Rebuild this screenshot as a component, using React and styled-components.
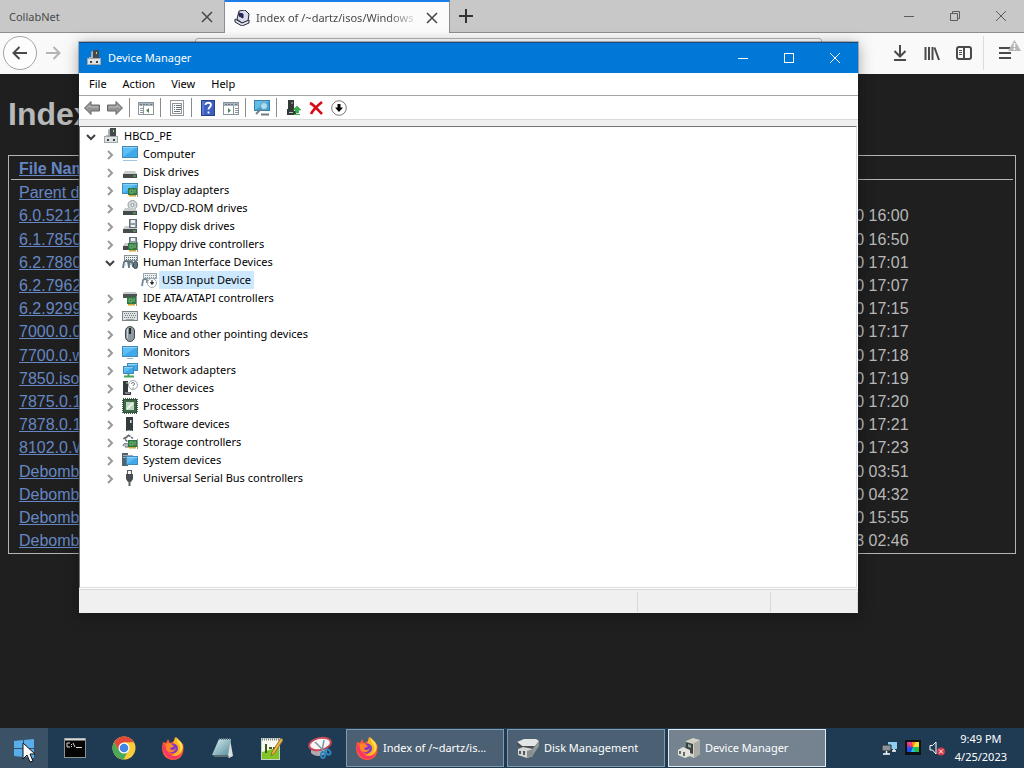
import React, { useState } from 'react';
import styled, { createGlobalStyle, css } from 'styled-components';

const uiFont = `'Noto Sans', 'Open Sans', sans-serif`;

const GlobalStyle = createGlobalStyle`
  * {
    box-sizing: border-box;
  }
  body {
    margin: 0;
    background: #1f1f1f;
  }
  button {
    padding: 0;
    border: 0;
    background: none;
    color: inherit;
    font: inherit;
  }
  svg {
    display: block;
    flex: none;
  }
`;

const Desktop = styled.div`
  position: relative;
  display: flex;
  flex-direction: column;
  height: 100vh;
  overflow: hidden;
  font: 11px/18px ${uiFont};
`;

/* browser */

const Browser = styled.div`
  flex: 1;
  min-height: 0;
  display: flex;
  flex-direction: column;
`;
const TabStrip = styled.div`
  display: flex;
  height: 33px;
  background: #c8c8c8;
  border-bottom: 1px solid #8e8e8e;
  color: #4a4a4a;
`;
const Tab = styled.div`
  display: flex;
  align-items: center;
  gap: 6px;
  width: 225px;
  padding: 2px 11px 0 9px;
  border-right: 1px solid #8e8e8e;
  ${(props) =>
    props.$active &&
    css`
      height: 33px;
      padding-top: 0;
      background: #fbfbfb;
      border-top: 2px solid #1a7de8;
    `}
`;
const TabTitle = styled.span`
  flex: 1;
  overflow: hidden;
  white-space: nowrap;
  ${(props) =>
    props.$fade &&
    css`
      mask-image: linear-gradient(to left, transparent, #000 32px);
    `}
`;
const NewTab = styled.button`
  display: grid;
  place-items: center;
  width: 32px;
`;
const BrowserControls = styled.div`
  display: flex;
  margin-left: auto;
  color: #5c5c5c;
`;
const BrowserControl = styled.button`
  display: grid;
  place-items: center;
  width: 46px;
`;
const NavBar = styled.div`
  display: flex;
  align-items: center;
  height: 41px;
  padding: 0 0 2px 3px;
  background: #f9f9f9;
  color: #4a4a4a;
`;
const BackButton = styled.button`
  display: grid;
  place-items: center;
  width: 34px;
  height: 34px;
  border: 1px solid #a5a5a5;
  border-radius: 50%;
  background: #fdfdfd;
`;
const NavButton = styled.button`
  display: grid;
  place-items: center;
  width: 32px;
  height: 32px;
  color: ${(props) => (props.$dim ? '#b4b4b4' : 'inherit')};
`;
const AddressBox = styled.input`
  flex: 1;
  min-width: 0;
  height: 30px;
  margin: 0 62px 0 126px;
  border: 1px solid #b4b4b4;
  border-radius: 3px;
  background: #fff;
  font: inherit;
`;
const MenuSection = styled.div`
  display: flex;
  align-items: center;
  height: 34px;
  margin-left: 3px;
  padding-left: 8px;
  border-left: 1px solid #dcdcdc;
`;
const Page = styled.main`
  flex: 1;
  padding: 21px 8px;
  background: #1f1f1f;
  color: #b8b8b8;
  font: 16px/18px 'Liberation Sans', Arial, sans-serif;
`;
const PageTitle = styled.h1`
  margin: 0 0 22px;
  font-size: 32px;
  line-height: 38px;
`;
const Listing = styled.table`
  width: 100%;
  padding: 2px;
  border: 1px solid #b4b4b4;
  border-spacing: 0;
  table-layout: fixed;
  white-space: nowrap;

  th {
    height: 22px;
    padding: 0 8px;
    border-bottom: 1px solid #b4b4b4;
    text-align: left;
  }
  th:nth-child(1) {
    width: 55%;
  }
  th:nth-child(2) {
    width: 205px;
  }
  td {
    height: 23px;
    padding: 2px 8px 0;
  }
  tbody tr:nth-child(5n + 2) td {
    height: 24px;
  }
`;
const FileLink = styled.a`
  color: #6687c4;
  text-decoration: underline;
`;

/* device manager */

const Window = styled.section`
  position: absolute;
  top: 42px;
  left: 79px;
  right: 166px;
  bottom: 155px;
  display: flex;
  flex-direction: column;
  border-top: 1px solid #1c4a78;
  background: #fff;
  box-shadow: 0 2px 14px rgba(0, 0, 0, 0.35), 0 0 0 1px rgba(30, 50, 70, 0.3);
  color: #000;
`;
const TitleBar = styled.header`
  display: flex;
  align-items: center;
  gap: 6px;
  height: 30px;
  padding-left: 7px;
  background: #0078d7;
  color: #fff;
`;
const WindowTitle = styled.h2`
  margin: 0;
  font-size: 11px;
  font-weight: 400;
`;
const WindowControls = styled.div`
  display: flex;
  align-self: stretch;
  margin-left: auto;
`;
const WindowControl = styled.button`
  display: grid;
  place-items: center;
  width: 46px;
`;
const MenuBar = styled.nav`
  display: flex;
  height: 23px;
  padding-left: 2px;
  border-bottom: 1px solid #a5a5a5;
`;
const MenuItem = styled.button`
  padding: 0 8px;
`;
const ToolBar = styled.div`
  display: flex;
  align-items: center;
  height: 24px;
  padding-left: 1px;
  border-bottom: 1px solid #dadada;
`;
const ToolButton = styled.button`
  display: grid;
  place-items: center;
  width: 23px;
  height: 22px;
`;
const ToolSeparator = styled.span`
  width: 1px;
  height: 19px;
  margin: 0 4px 0 3px;
  background: #8c8c8c;
`;
const Content = styled.div`
  flex: 1;
  min-height: 0;
  display: flex;
  padding: 6px 1px 1px 0;
  background: linear-gradient(#f0f0f0 6px, #fff 6px);
`;
const Tree = styled.ul`
  flex: 1;
  margin: 0;
  padding: 0 0 0 3px;
  overflow: auto;
  border: 1px solid #dcdcdc;
  border-top-color: #70757a;
  border-left-color: #70757a;
  list-style: none;
`;
const Branch = styled.ul`
  margin: 0;
  padding: 0 0 0 19px;
  list-style: none;
`;
const Row = styled.div`
  display: flex;
  align-items: center;
  height: 18px;
`;
const Twisty = styled.button`
  display: grid;
  place-items: center;
  width: 16px;
  height: 16px;
  margin-right: 4px;
  padding-top: 1px;
  color: ${(props) => (props.$open ? '#404040' : '#9a9a9a')};
`;
const TwistyGap = styled.span`
  width: 20px;
`;
const Label = styled.span`
  margin-left: 2px;
  padding: 0 3px;
  background: ${(props) => (props.$selected ? '#cce8ff' : 'transparent')};
  line-height: 18px;
  white-space: nowrap;
`;
const StatusBar = styled.footer`
  display: grid;
  grid-template-columns: 1fr 133px 87px;
  height: 24px;
  padding: 2px 0 1px;
  border-top: 1px solid #d7d7d7;
  background: #f0f0f0;
`;
const StatusCell = styled.span`
  border-right: 1px solid #d7d7d7;
`;

/* taskbar */

const TaskBar = styled.footer`
  display: flex;
  height: 40px;
  background: #1f3b54;
  color: #fff;
`;
const StartButton = styled.button`
  display: grid;
  place-items: center;
  width: 48px;
  background: #3b5166;
`;
const PinnedApps = styled.div`
  display: flex;
  padding-left: 2px;
`;
const Pinned = styled.button`
  display: grid;
  place-items: center;
  width: 49px;
`;
const Tasks = styled.div`
  display: flex;
  gap: 3px;
  padding: 1px 0 1px 2px;
`;
const Task = styled.button`
  display: flex;
  align-items: center;
  gap: 4px;
  width: 158px;
  padding-left: 8px;
  border: 1px solid ${(props) => (props.$active ? '#e4e9ed' : '#8398a8')};
  background: ${(props) => (props.$active ? '#74838f' : '#4b6072')};
`;
const Tray = styled.div`
  display: flex;
  align-items: center;
  gap: 8px;
  margin-left: auto;
  padding-right: 17px;
`;
const TrayButton = styled.button``;
const Clock = styled.time`
  padding-left: 2px;
  text-align: center;
`;
const Pointer = styled.svg`
  position: absolute;
  left: 22px;
  bottom: 5px;
`;

const Svg = ({ size = 16, box = 16, children, ...rest }) => (
  <svg width={size} height={size} viewBox={`0 0 ${box} ${box}`} fill="none" aria-hidden="true" {...rest}>
    {children}
  </svg>
);

const Screen = ({ x = 0, y = 1, w = 16, h = 11 }) => (
  <g>
    <rect x={x + 0.5} y={y + 0.5} width={w - 1} height={h - 1} fill="#5dbdf5" stroke="#4389b8" />
    <path d={`M${x + 1} ${y + h - 1}L${x + w - 1} ${y + 1}V${y + h - 1}Z`} fill="#3fa9ea" />
    <path d={`M${x + 1} ${y + 1.5}h${w - 2}`} stroke="#8bd3fa" />
  </g>
);

const Board = ({ x = 6, y = 7 }) => (
  <g>
    <path d={`M${x + 1} ${y + 7.5}h7`} stroke="#d2a432" strokeWidth="2" />
    <rect x={x} y={y} width="9" height="7" fill="#2c7a3f" />
    <path d={`M${x + 9.5} ${y - 1}v10`} stroke="#8d9690" />
    <path d={`M${x + 2} ${y + 2}h3v3h-3zM${x + 7} ${y + 1}v4`} stroke="#7db783" />
  </g>
);

const Drive = ({ y = 9 }) => (
  <g>
    <path d={`M3 ${y}h10l2 3H1z`} fill="#c9cccc" />
    <rect x="1" y={y + 3} width="14" height="4" fill="#454b4b" />
    <path d={`M11 ${y + 5}h3`} stroke="#60c76d" />
  </g>
);

const FloppyShape = () => (
  <g>
    <rect x="7.500" y="1.500" width="7" height="8" fill="#929ea5" stroke="#65727a" />
    <path d="M9 2h4v3H9zM9 7h4v2H9z" fill="#eef2f3" />
  </g>
);

const deviceIcons = {
  root: (
    <>
      <path d="M5 2l3-2v9H5z" fill="#a9aeb1" />
      <rect x="7" y="0" width="6" height="9" fill="#44494c" />
      <path d="M10 2h1v2h-1z" fill="#a6dda5" />
      <path d="M3 7h3v2H3z" fill="#aeb5b8" />
      <rect x="1.500" y="8.500" width="13" height="6" fill="#dfe2e3" stroke="#a3a8ab" />
      <path d="M4 11h2v2H4zM10 11h2v2h-2z" fill="#3d4244" />
    </>
  ),
  computer: (
    <>
      <Screen y={0} h={12} />
      <path d="M1 14.500h14" stroke="#9ec4de" />
    </>
  ),
  disk: <Drive y={7} />,
  display: (
    <>
      <Screen />
      <Board x={6} y={6} />
    </>
  ),
  dvd: (
    <>
      <circle cx="10.500" cy="5" r="4.500" fill="#d7dadb" stroke="#969da0" />
      <circle cx="10.500" cy="5" r="1.500" fill="#fff" stroke="#8b9295" />
      <Drive y={8} />
    </>
  ),
  floppy: (
    <>
      <Drive y={8} />
      <FloppyShape />
    </>
  ),
  floppyController: (
    <>
      <Drive y={7} />
      <FloppyShape />
      <Board x={6} y={7} />
    </>
  ),
  hid: (
    <>
      <rect x="2.500" y="1.500" width="13" height="5" fill="#edf0f1" stroke="#859198" />
      <path d="M4 3.500h11M4 5.500h11" stroke="#5f6b71" strokeDasharray="1 1" />
      <path d="M1 14l1-6 2-1 2 1 1 5M7 14V8h3l1 5" stroke="#65747c" strokeWidth="1.800" />
      <rect x="11.500" y="7.500" width="4" height="7" rx="2" fill="#63757f" stroke="#3d4b53" />
      <path d="M3 9v3M8.500 9v2" stroke="#8ccbe4" />
    </>
  ),
  hidDisabled: (
    <>
      <rect x="2.500" y="1.500" width="13" height="5" fill="#edf0f1" stroke="#98a8b0" />
      <path d="M4 3.500h11M4 5.500h11" stroke="#859299" strokeDasharray="1 1" />
      <path d="M1 14l1-6 2-1 2 1v3" stroke="#718994" strokeWidth="1.800" />
      <circle cx="11" cy="11" r="4.500" fill="#fff" stroke="#a3adb4" />
      <path d="M11 8v3M9.500 10.500h3L11 12.500z" stroke="#222" fill="#222" />
    </>
  ),
  ide: (
    <>
      <path d="M2 2h12l1 2H1z" fill="#c3c8c8" />
      <rect x="1" y="4" width="14" height="4" fill="#4d5352" />
      <Board x={5} y={7} />
    </>
  ),
  keyboard: (
    <>
      <rect x=".5" y="3.500" width="15" height="9" fill="#dfe2e3" stroke="#7d8488" />
      <path d="M2 5.500h12M3 7.500h11M2 9.500h12" stroke="#767d81" strokeDasharray="1 1" />
      <path d="M4 11.500h8" stroke="#9aa0a3" />
    </>
  ),
  mouse: (
    <>
      <rect x="3.500" y=".5" width="9" height="15" rx="4.500" fill="#8e999f" stroke="#414a50" />
      <path d="M5.500 3v9" stroke="#c7d0d4" />
      <path d="M8 2v6" stroke="#232a2e" strokeWidth="2" />
    </>
  ),
  monitor: (
    <>
      <Screen y={2} h={11} />
      <path d="M5 14.500h6" stroke="#8fb4ca" />
    </>
  ),
  network: (
    <>
      <Screen x={5} y={1} w={11} h={8} />
      <Screen x={1} y={4} w={11} h={8} />
      <path d="M6.500 12v2M2 14.500h10" stroke="#42a75b" strokeWidth="2" />
    </>
  ),
  other: (
    <>
      <path d="M1 1h5v11h3v3H1z" fill="#353b3d" />
      <path d="M4 3h2M3 13h5" stroke="#bfc5c7" />
      <circle cx="11" cy="5" r="4.500" fill="#fff" stroke="#9da4ab" />
      <path d="M9.500 4c0-2 3-2 3 0 0 1-1.500 1-1.500 2M11 7.500v1" stroke="#4e5e77" />
    </>
  ),
  processor: (
    <>
      <path d="M1 1h14v14H1z" stroke="#4d6152" strokeWidth="2" strokeDasharray="1 1" />
      <rect x="1.500" y="1.500" width="13" height="13" fill="#3d6848" stroke="#2c5035" />
      <rect x="4" y="4" width="8" height="8" fill="#bad6be" />
      <path d="M5 11l6-6" stroke="#e9f3ea" strokeWidth="2" />
    </>
  ),
  software: (
    <>
      <rect x="4" y="1" width="7" height="14" fill="#343b3d" />
      <path d="M8 4h1.500v3H8z" fill="#e1e5e6" />
      <path d="M5 14.500h5" stroke="#92999c" />
    </>
  ),
  storage: (
    <>
      <path d="M7 1L2 4.500 6 8M3 4.500l4-3 4 3" stroke="#596369" strokeWidth="1.500" strokeDasharray="3 .8" />
      <path d="M1 12c0-4 7-3 6 1H3" fill="#b9bfc2" stroke="#636d70" />
      <Board x={6} y={6} />
    </>
  ),
  system: (
    <>
      <rect x="0" y="1" width="6" height="13" fill="#4f6470" />
      <path d="M1 3.500h10M1 5.500h4" stroke="#9aabb4" />
      <Screen x={4} y={4} w={12} h={9} />
    </>
  ),
  usb: (
    <>
      <rect x="5.500" y=".5" width="4" height="4" fill="#f3f4f4" stroke="#565d60" />
      <path d="M4 4h7v5L9 12H6L4 9z" fill="#474d50" />
      <path d="M7.500 11v5" stroke="#5b6163" strokeWidth="2" />
    </>
  ),
};

const DeviceIcon = ({ name }) => <Svg>{deviceIcons[name]}</Svg>;

const Arrow = ({ back }) => (
  <Svg transform={back ? undefined : 'scale(-1 1)'}>
    <path d="M.5 8L7 1.500v3.500h8.500v6H7v3.500z" fill="#939393" stroke="#676767" />
    <path d="M3 8l3-2.500V7h8" stroke="#c0c0c0" />
  </Svg>
);

const Panel = ({ flip }) => (
  <Svg>
    <rect x=".5" y="2.500" width="15" height="12" fill="#fff" stroke="#8b959b" />
    <path d="M1 4.500h14" stroke="#aab6bf" strokeWidth="3" />
    <path d="M2 4.500h9M12 4.500h3" stroke="#6d7880" strokeDasharray="2 1" />
    <path d={flip ? 'M10.500 6v8' : 'M5.500 6v8'} stroke="#8b959b" />
    <path d={flip ? 'M12 8.500h3M12 10.500h3M12 12.500h3' : 'M2 8.500h3M2 10.500h3M2 12.500h3'} stroke="#8c979e" />
    <path d={flip ? 'M5 8v5l3-2.500z' : 'M11 8v5l-3-2.500z'} fill="#4a8851" />
  </Svg>
);

const PropertiesIcon = () => (
  <Svg>
    <rect x="1.500" y=".5" width="13" height="15" fill="#fff" stroke="#92999f" />
    <rect x="3.500" y="3.500" width="9" height="10" stroke="#8d969c" />
    <path d="M5 5.500h1M7 5.500h5M5 7.500h1M7 7.500h5M5 9.500h1M7 9.500h5M5 11.500h6" stroke="#6b777f" />
  </Svg>
);

const HelpIcon = () => (
  <Svg>
    <rect x="1.500" y=".5" width="13" height="15" fill="#3d5fc0" stroke="#273f91" />
    <path d="M3 1v14" stroke="#7896df" />
    <path d="M5.500 5c0-3 5.500-3 5.500 0 0 2-2.500 2-2.500 4.500M8.500 11.500v2" stroke="#fff" strokeWidth="1.800" />
  </Svg>
);

const ScanIcon = () => (
  <Svg size={18} box={18}>
    <rect x="1.500" y="1.500" width="15" height="10" fill="#60bce9" stroke="#397fa8" />
    <path d="M2 11L16 2v9z" fill="#3ba4dd" />
    <circle cx="11" cy="7" r="3.500" fill="#addff4" stroke="#6b9eb8" />
    <path d="M8 10l-5 5" stroke="#75848c" strokeWidth="2" />
    <path d="M8 15.500h8" stroke="#6a7d87" strokeWidth="2" />
  </Svg>
);

const UpdateIcon = () => (
  <Svg>
    <path d="M3 0h6v11h2v4H2V9h1z" fill="#343a38" />
    <path d="M6 3h2M4 12.500h4" stroke="#b7c1bb" />
    <path d="M12 6l4 4h-2.500v3h-3v-3H8z" fill="#36b249" stroke="#238b34" strokeWidth=".5" />
    <path d="M9 14.500h6" stroke="#4aae55" />
  </Svg>
);

const RemoveIcon = () => (
  <Svg>
    <path d="M2 3c4 2 8 7 12 11M14 2C9 6 5 10 3 14" stroke="#d50b18" strokeWidth="2.600" />
  </Svg>
);

const DisableIcon = () => (
  <Svg>
    <circle cx="8" cy="8" r="7.300" fill="#fff" stroke="#777" />
    <path d="M8 4v4" stroke="#000" strokeWidth="3" />
    <path d="M4 7.500h8L8 12z" fill="#000" />
  </Svg>
);

const Cross = ({ size = 12, width = 1 }) => (
  <Svg size={size} box={12}>
    <path d="M1 1l10 10M11 1L1 11" stroke="currentColor" strokeWidth={width} />
  </Svg>
);

const Minus = () => (
  <Svg size={12} box={12}>
    <path d="M1 6.500h10" stroke="currentColor" />
  </Svg>
);

const SiteIcon = () => (
  <Svg>
    <path d="M5 1l6-1 4 4-1 7-6 2-5-4z" fill="#d8daea" stroke="#24263b" />
    <path d="M5 3l4 1v4L5 6z" fill="#24267a" stroke="#24263b" />
    <path d="M1 9l7 4 7-3v3l-7 3-7-4z" fill="#dfe1ea" stroke="#24263b" />
  </Svg>
);

const FirefoxIcon = () => (
  <Svg size={24} box={24}>
    <path d="M2 6l3 1 2-4 2 4c2-1 4-1 5-4 0-1 0-1 1-2 2 3 5 4 6 8l1-2c2 11-2 17-10 17S-1 17 2 6z" fill="#ff5a36" />
    <path d="M14 1c3 4 9 7 7 14-2 8-14 9-18 2 6 4 12 2 12-4 0-4-4-4-2-8z" fill="#ffb31e" />
    <path d="M2 8c-1 8 3 14 10 15 5 0 8-3 9-7-4 6-13 5-15-2z" fill="#f9356a" />
    <circle cx="12" cy="12.500" r="5" fill="#8338c7" />
    <path d="M5 8c4-2 6 1 8 2-1 2-4 1-4 3 2 2 4 1 6-1-1 5-8 6-10 1z" fill="#ff8529" />
    <path d="M17 7c3 3 3 7 1 10 4-2 5-7 2-11l-5-5z" fill="#ffe14a" />
  </Svg>
);

const ChromeIcon = () => (
  <Svg size={24} box={24}>
    <circle cx="12" cy="12" r="11.500" fill="#f9cc39" />
    <path d="M12 12L2 6.300A11.500 11.500 0 0122 6.300H12z" fill="#df4a3c" />
    <path d="M2 6.300L7.200 15 11 7z" fill="#df4a3c" />
    <path d="M7 14.800L2 6.300A11.500 11.500 0 0011.500 23.500L16 15z" fill="#4ba859" />
    <circle cx="12" cy="12" r="5.500" fill="#fff" />
    <circle cx="12" cy="12" r="4.300" fill="#4384e8" />
  </Svg>
);

const ConsoleIcon = () => (
  <Svg size={24} box={24}>
    <rect x="1.500" y="2.500" width="21" height="19" fill="#050505" stroke="#8d9091" />
    <path d="M2 3.500h20" stroke="#d8d9d9" strokeWidth="2" />
    <path d="M7 7H4v4h3M8.500 8v1M8.500 10v1M10 7l2 4M13 11.500h6" stroke="#dcdcdc" />
  </Svg>
);

const NotepadIcon = () => (
  <Svg size={24} box={24}>
    <defs>
      <linearGradient id="paper" x1="0" y1="0" x2="1" y2="1">
        <stop stopColor="#dbeff2" />
        <stop offset="1" stopColor="#568d9b" />
      </linearGradient>
    </defs>
    <path d="M20 3l3 17-4 2-3-3z" fill="#dbe1df" />
    <path d="M9 3h12l-3 16H2z" fill="url(#paper)" />
    <path d="M2 19h16l1 2H5z" fill="#5b6d72" />
    <path d="M9 3h12" stroke="#677c82" strokeWidth="2" strokeDasharray="1 1" />
  </Svg>
);

const EditorIcon = () => (
  <Svg size={24} box={24}>
    <rect x="2.500" y="2.500" width="18" height="21" fill="#f6f7ef" stroke="#c7cfc4" />
    <path d="M3 16l17-5v12H3z" fill="#80c528" />
    <path d="M3 3.500h17" stroke="#7d8586" strokeWidth="2" strokeDasharray="1 1" />
    <path d="M7 9v8M6 9h2M10 12h3M14 12h3" stroke="#425b1b" strokeWidth="2" />
    <path d="M22 2l2 2-9 14-3 2 1-4z" fill="#edb93b" stroke="#966e39" />
  </Svg>
);

const SnipIcon = () => (
  <Svg size={24} box={24}>
    <path d="M3 13c4 3 9 3 16-2v5c-4 5-12 5-16 1z" fill="#b0a9b2" />
    <ellipse cx="12" cy="8" rx="11" ry="6" transform="rotate(-12 12 8)" fill="#f7f7f8" stroke="#c94958" strokeWidth="2" />
    <path d="M7 6l8 8M16 4l-2 11" stroke="#8293a3" strokeWidth="1.500" />
    <ellipse cx="15" cy="19" rx="2" ry="3" stroke="#2d85bb" strokeWidth="2" />
    <ellipse cx="20" cy="16" rx="2" ry="3" transform="rotate(-40 20 16)" stroke="#2d85bb" strokeWidth="2" />
  </Svg>
);

const DiskMgmtIcon = () => (
  <Svg size={24} box={24}>
    <path d="M1 6l7-3h12l3 2-4 5H6z" fill="#e3e5e4" />
    <path d="M1 6l5 4h13l-3 3H6L1 9z" fill="#4b5152" />
    <path d="M19 10l4-5v5l-6 9v-7z" fill="#929898" />
    <path d="M2 13l5-2 10 2v7l-6 2-9-3z" fill="#d4d6d4" />
    <path d="M11 15l6-2v7l-6 2z" fill="#888f8e" />
    <path d="M4 15v3M8 15v4" stroke="#51595a" strokeWidth="2" />
  </Svg>
);

const DeviceTaskIcon = () => (
  <Svg size={24} box={24}>
    <path d="M9 5l7-3 7 2v14l-6 4-9-4z" fill="#d3d2c9" />
    <path d="M17 7l6-3v14l-6 4z" fill="#a9aaa4" />
    <path d="M9 6l7 2v10l-8-3z" fill="#3b4340" />
    <path d="M11 8l3 1v3l-3-1z" fill="#92a9a0" />
    <path d="M1 14l5-3 7 3v6l-5 2-7-3z" fill="#e1e2dc" />
    <path d="M3 15v3M7 16v4" stroke="#656b66" strokeWidth="2" />
  </Svg>
);

const devices = [
  ['computer', 'Computer'],
  ['disk', 'Disk drives'],
  ['display', 'Display adapters'],
  ['dvd', 'DVD/CD-ROM drives'],
  ['floppy', 'Floppy disk drives'],
  ['floppyController', 'Floppy drive controllers'],
  ['hid', 'Human Interface Devices', ['hidDisabled', 'USB Input Device']],
  ['ide', 'IDE ATA/ATAPI controllers'],
  ['keyboard', 'Keyboards'],
  ['mouse', 'Mice and other pointing devices'],
  ['monitor', 'Monitors'],
  ['network', 'Network adapters'],
  ['other', 'Other devices'],
  ['processor', 'Processors'],
  ['software', 'Software devices'],
  ['storage', 'Storage controllers'],
  ['system', 'System devices'],
  ['usb', 'Universal Serial Bus controllers'],
];

const files = [
  ['6.0.5212', '2020-Apr-20 16:00'],
  ['6.1.7850', '2020-Apr-20 16:50'],
  ['6.2.7880', '2020-Apr-20 17:01'],
  ['6.2.7962', '2020-Apr-20 17:07'],
  ['6.2.9299', '2020-Apr-20 17:15'],
  ['7000.0.0', '2020-Apr-20 17:17'],
  ['7700.0.w', '2020-Apr-20 17:18'],
  ['7850.iso', '2020-Apr-20 17:19'],
  ['7875.0.1', '2020-Apr-20 17:20'],
  ['7878.0.1', '2020-Apr-20 17:21'],
  ['8102.0.W', '2020-Apr-20 17:23'],
  ['Debomb', '2020-Apr-20 03:51'],
  ['Debomb', '2020-Apr-20 04:32'],
  ['Debomb', '2020-Apr-20 15:55'],
  ['Debomb', '2020-Apr-23 02:46'],
];

const TwistyButton = ({ open, label, onClick }) => (
  <Twisty $open={open} aria-expanded={open} aria-label={label} onClick={onClick}>
    <Svg size={12} box={12}>
      <path d={open ? 'M2 4l4 4 4-4' : 'M4 2l4 4-4 4'} stroke="currentColor" strokeWidth="2" />
    </Svg>
  </Twisty>
);

const DeviceTree = () => {
  const [open, setOpen] = useState(true);
  const [hidOpen, setHidOpen] = useState(true);

  return (
    <Tree>
      <li>
        <Row>
          <TwistyButton open={open} label="HBCD_PE" onClick={() => setOpen(!open)} />
          <DeviceIcon name="root" />
          <Label>HBCD_PE</Label>
        </Row>
        {open && (
          <Branch>
            {devices.map(([icon, name, child]) => (
              <li key={name}>
                <Row>
                  <TwistyButton
                    open={Boolean(child) && hidOpen}
                    label={name}
                    onClick={() => child && setHidOpen(!hidOpen)}
                  />
                  <DeviceIcon name={icon} />
                  <Label>{name}</Label>
                </Row>
                {child && hidOpen && (
                  <Branch>
                    <li>
                      <Row>
                        <TwistyGap />
                        <DeviceIcon name={child[0]} />
                        <Label $selected>{child[1]}</Label>
                      </Row>
                    </li>
                  </Branch>
                )}
              </li>
            ))}
          </Branch>
        )}
      </li>
    </Tree>
  );
};

const DeviceManager = () => (
  <Window>
    <TitleBar>
      <DeviceIcon name="root" />
      <WindowTitle>Device Manager</WindowTitle>
      <WindowControls>
        <WindowControl aria-label="Minimize"><Minus /></WindowControl>
        <WindowControl aria-label="Maximize">
          <Svg size={12} box={12}><rect x="1.500" y="1.500" width="9" height="9" stroke="currentColor" /></Svg>
        </WindowControl>
        <WindowControl aria-label="Close"><Cross /></WindowControl>
      </WindowControls>
    </TitleBar>
    <MenuBar>
      <MenuItem>File</MenuItem>
      <MenuItem>Action</MenuItem>
      <MenuItem>View</MenuItem>
      <MenuItem>Help</MenuItem>
    </MenuBar>
    <ToolBar>
      <ToolButton aria-label="Back"><Arrow back /></ToolButton>
      <ToolButton aria-label="Forward"><Arrow /></ToolButton>
      <ToolSeparator />
      <ToolButton aria-label="Show console tree"><Panel /></ToolButton>
      <ToolSeparator />
      <ToolButton aria-label="Properties"><PropertiesIcon /></ToolButton>
      <ToolSeparator />
      <ToolButton aria-label="Help"><HelpIcon /></ToolButton>
      <ToolButton aria-label="Show action pane"><Panel flip /></ToolButton>
      <ToolSeparator />
      <ToolButton aria-label="Scan for hardware changes"><ScanIcon /></ToolButton>
      <ToolSeparator />
      <ToolButton aria-label="Update driver"><UpdateIcon /></ToolButton>
      <ToolButton aria-label="Uninstall device"><RemoveIcon /></ToolButton>
      <ToolButton aria-label="Disable device"><DisableIcon /></ToolButton>
    </ToolBar>
    <Content>
      <DeviceTree />
    </Content>
    <StatusBar>
      <StatusCell />
      <StatusCell />
      <StatusCell />
    </StatusBar>
  </Window>
);

const BrowserWindow = () => (
  <Browser>
    <TabStrip>
      <Tab>
        <TabTitle>CollabNet</TabTitle>
        <button aria-label="Close CollabNet"><Cross width={1.6} /></button>
      </Tab>
      <Tab $active>
        <SiteIcon />
        <TabTitle $fade>Index of /~dartz/isos/Windows</TabTitle>
        <button aria-label="Close Index"><Cross width={1.6} /></button>
      </Tab>
      <NewTab aria-label="New tab">
        <Svg><path d="M8 1v14M1 8h14" stroke="#333" strokeWidth="2" /></Svg>
      </NewTab>
      <BrowserControls>
        <BrowserControl aria-label="Minimize browser"><Minus /></BrowserControl>
        <BrowserControl aria-label="Restore browser">
          <Svg size={12} box={12}><path d="M1.500 3.500h7v7h-7zM3.500 3V1.500h7v7H9" stroke="currentColor" /></Svg>
        </BrowserControl>
        <BrowserControl aria-label="Close browser"><Cross /></BrowserControl>
      </BrowserControls>
    </TabStrip>
    <NavBar>
      <BackButton aria-label="Previous page">
        <Svg><path d="M15 8H2M7.500 2L1.500 8l6 6" stroke="currentColor" strokeWidth="2" /></Svg>
      </BackButton>
      <NavButton $dim aria-label="Next page">
        <Svg><path d="M1 8h13M8.500 2l6 6-6 6" stroke="currentColor" strokeWidth="2" /></Svg>
      </NavButton>
      <AddressBox aria-label="Address" />
      <NavButton aria-label="Downloads">
        <Svg><path d="M8 0v11M2.500 6L8 11.500 13.500 6M2 15h12" stroke="currentColor" strokeWidth="2" /></Svg>
      </NavButton>
      <NavButton aria-label="Library">
        <Svg><path d="M1.500 2v13M5 2v13M8.500 2v13M10.500 2.500L15 15" stroke="currentColor" strokeWidth="2" /></Svg>
      </NavButton>
      <NavButton aria-label="Sidebar">
        <Svg>
          <rect x="1" y="2" width="14" height="12" rx="2" stroke="currentColor" strokeWidth="2" />
          <path d="M8 2v12" stroke="currentColor" strokeWidth="2" />
          <path d="M3 5.500h3M3 7.500h3M3 9.500h3" stroke="currentColor" />
        </Svg>
      </NavButton>
      <MenuSection>
        <NavButton aria-label="Open menu">
          <Svg width="26" height="28" viewBox="0 0 26 28">
            <path d="M4 9h12M4 14h12M4 19h12" stroke="currentColor" strokeWidth="2" />
            <path d="M19.500 1L26 12H13z" fill="#b7b7b7" />
            <path d="M19.500 4v4M19.500 9v2" stroke="#fff" strokeWidth="1.500" />
          </Svg>
        </NavButton>
      </MenuSection>
    </NavBar>
    <Page>
      <PageTitle>Index of</PageTitle>
      <Listing>
        <thead>
          <tr>
            <th><FileLink href="#name">File Name</FileLink></th>
            <th aria-label="Size" />
            <th aria-label="Date" />
          </tr>
        </thead>
        <tbody>
          <tr>
            <td><FileLink href="#parent">Parent directory</FileLink></td>
            <td />
            <td />
          </tr>
          {files.map(([name, date]) => (
            <tr key={date}>
              <td><FileLink href="#file">{name}</FileLink></td>
              <td />
              <td>{date}</td>
            </tr>
          ))}
        </tbody>
      </Listing>
    </Page>
  </Browser>
);

const DesktopTaskBar = () => (
  <TaskBar>
    <StartButton aria-label="Start">
      <Svg size={22} box={22}>
        <path d="M1 4l9-1v8H1zM11 3l10-1v9H11zM1 12h9v8l-9-1zM11 12h10v9l-10-1z" fill="#58aeea" />
      </Svg>
    </StartButton>
    <PinnedApps>
      <Pinned aria-label="Command Prompt"><ConsoleIcon /></Pinned>
      <Pinned aria-label="Chrome"><ChromeIcon /></Pinned>
      <Pinned aria-label="Firefox"><FirefoxIcon /></Pinned>
      <Pinned aria-label="Notepad"><NotepadIcon /></Pinned>
      <Pinned aria-label="Text editor"><EditorIcon /></Pinned>
      <Pinned aria-label="Snipping Tool"><SnipIcon /></Pinned>
    </PinnedApps>
    <Tasks>
      <Task><FirefoxIcon />Index of /~dartz/is...</Task>
      <Task><DiskMgmtIcon />Disk Management</Task>
      <Task $active><DeviceTaskIcon />Device Manager</Task>
    </Tasks>
    <Tray>
      <TrayButton aria-label="Network">
        <Svg>
          <path d="M7 2h9v7H7z" fill="#8dcdf1" />
          <path d="M1 5h9v6H1z" fill="#8a9297" stroke="#252b30" />
          <path d="M5.500 11v3M2 14h7M13 9v2M11 11h4" stroke="#fff" strokeWidth="1.500" />
        </Svg>
      </TrayButton>
      <TrayButton aria-label="Display colors">
        <Svg>
          <rect width="16" height="15" fill="#111" />
          <path d="M2 2h6v5H2z" fill="#e64431" />
          <path d="M2 2h4v4z" fill="#e839cc" />
          <path d="M8 2h6v5H8z" fill="#f4e333" />
          <path d="M2 7h6v5H2z" fill="#1c4ee8" />
          <path d="M8 7h6v5H8z" fill="#28bd48" />
          <path d="M8 7l-6 1v-3z" fill="#9337dd" />
          <path d="M8 7l3-5H7z" fill="#ff8f27" />
          <path d="M8 7l-2 5h4z" fill="#21c4dd" />
        </Svg>
      </TrayButton>
      <TrayButton aria-label="Volume muted">
        <Svg>
          <path d="M1 5.500h2.500L7 2v12l-3.500-4H1z" stroke="#fff" />
          <circle cx="12" cy="11.500" r="4" fill="#d43b48" />
          <path d="M10 9.500l4 4M14 9.500l-4 4" stroke="#fff" />
        </Svg>
      </TrayButton>
      <Clock>
        9:49 PM
        <br />
        4/25/2023
      </Clock>
    </Tray>
  </TaskBar>
);

const App = () => (
  <Desktop>
    <GlobalStyle />
    <BrowserWindow />
    <DesktopTaskBar />
    <DeviceManager />
    <Pointer width="13" height="21" viewBox="0 0 13 21" aria-hidden="true">
      <path d="M1 1v16l4-4 3 7 3-1-3-7h5z" fill="#fff" stroke="#111" />
    </Pointer>
  </Desktop>
);

export default App;
